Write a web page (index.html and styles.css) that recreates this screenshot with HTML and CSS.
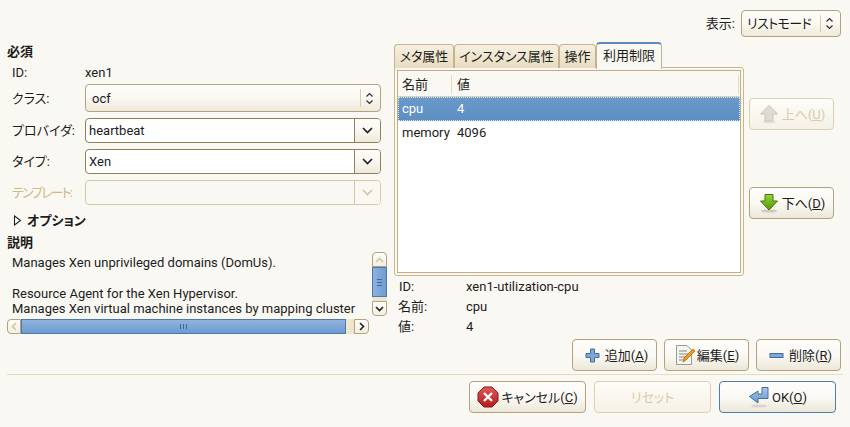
FILE: index.html
```html
<!DOCTYPE html>
<html lang="ja">
<head>
<meta charset="utf-8">
<title>リソース</title>
<link rel="stylesheet" href="styles.css">
</head>
<body>
<div class="dialog">
  <div class="topbar">
    <span class="topbar-label">表示:</span>
    <div class="combo combo-mode"><span class="combo-text">リストモード</span><span class="combo-sep"></span>
      <svg class="updown" width="9" height="13" viewBox="0 0 9 13"><path d="M1.5 4.5 4.5 1.5 7.5 4.5M1.5 8.5 4.5 11.5 7.5 8.5" fill="none" stroke="#2e2e2e" stroke-width="1.2"/></svg>
    </div>
  </div>
  <div class="main">
    <div class="left">
      <div class="heading h-required">必須</div>
      <div class="row row-id"><span class="lbl">ID:</span><span class="idval">xen1</span></div>
      <div class="row row-class"><span class="lbl">クラス:</span>
        <div class="combo combo-class"><span class="combo-text">ocf</span><span class="combo-sep"></span>
          <svg class="updown" width="9" height="13" viewBox="0 0 9 13"><path d="M1.5 4.5 4.5 1.5 7.5 4.5M1.5 8.5 4.5 11.5 7.5 8.5" fill="none" stroke="#2e2e2e" stroke-width="1.2"/></svg>
        </div>
      </div>
      <div class="row row-entry"><span class="lbl">プロバイダ:</span>
        <div class="entry-combo"><span class="entry">heartbeat</span><span class="arrowbtn"><svg width="11" height="7" viewBox="0 0 11 7"><path d="M1 1 5.5 5.5 10 1" fill="none" stroke="#222" stroke-width="1.7"/></svg></span></div>
      </div>
      <div class="row row-entry"><span class="lbl">タイプ:</span>
        <div class="entry-combo"><span class="entry">Xen</span><span class="arrowbtn"><svg width="11" height="7" viewBox="0 0 11 7"><path d="M1 1 5.5 5.5 10 1" fill="none" stroke="#222" stroke-width="1.7"/></svg></span></div>
      </div>
      <div class="row row-entry is-disabled"><span class="lbl">テンプレート:</span>
        <div class="entry-combo"><span class="entry"></span><span class="arrowbtn"><svg width="11" height="7" viewBox="0 0 11 7"><path d="M1 1 5.5 5.5 10 1" fill="none" stroke="#d3c5a2" stroke-width="1.7"/></svg></span></div>
      </div>
      <div class="expander"><svg width="9" height="11" viewBox="0 0 9 11"><path d="M1.5 1 7.5 5.5 1.5 10Z" fill="#fff" stroke="#222" stroke-width="1.1"/></svg><span>オプション</span></div>
      <div class="heading h-desc">説明</div>
      <div class="scrolled">
        <div class="desc">Manages Xen unprivileged domains (DomUs).<br><br>Resource Agent for the Xen Hypervisor.<br>Manages Xen virtual machine instances by mapping cluster</div>
        <div class="vscroll">
          <span class="sb-btn sb-v"><svg width="9" height="6" viewBox="0 0 9 6"><path d="M1 5 4.5 1.5 8 5" fill="none" stroke="#d3c5a2" stroke-width="1.6"/></svg></span>
          <span class="thumb-v"><i></i><i></i><i></i></span>
          <span class="trough"></span>
          <span class="sb-btn sb-v"><svg width="9" height="6" viewBox="0 0 9 6"><path d="M1 1 4.5 4.5 8 1" fill="none" stroke="#222" stroke-width="1.6"/></svg></span>
        </div>
        <div class="hscroll">
          <span class="sb-btn sb-h"><svg width="6" height="9" viewBox="0 0 6 9"><path d="M5 1 1.5 4.5 5 8" fill="none" stroke="#d3c5a2" stroke-width="1.6"/></svg></span>
          <span class="thumb-h"><i></i><i></i><i></i></span>
          <span class="trough"></span>
          <span class="sb-btn sb-h"><svg width="6" height="9" viewBox="0 0 6 9"><path d="M1 1 4.5 4.5 1 8" fill="none" stroke="#222" stroke-width="1.6"/></svg></span>
        </div>
      </div>
    </div>
    <div class="right">
      <div class="tabs">
        <span class="tab tab-a">メタ属性</span>
        <span class="tab tab-b">インスタンス属性</span>
        <span class="tab tab-c">操作</span>
        <span class="tab tab-active">利用制限</span>
      </div>
      <div class="panel-row">
        <div class="panel">
          <div class="tree">
            <div class="tree-head"><span class="col-name">名前</span><span class="col-val">値</span></div>
            <div class="tree-row selected"><span class="col-name">cpu</span><span class="col-val">4</span></div>
            <div class="tree-row"><span class="col-name">memory</span><span class="col-val">4096</span></div>
          </div>
        </div>
        <div class="move-btns">
          <button class="btn btn-move" disabled>
            <svg width="20" height="20" viewBox="0 0 20 20"><ellipse cx="10" cy="18" rx="7" ry="1.5" fill="#e6e1d6"/><path d="M10 1.5 18.500 10H14V17H6V10H1.500Z" fill="#dedbd2" stroke="#c8c5bb"/></svg>
            <span>上へ(<u>U</u>)</span>
          </button>
          <button class="btn btn-move">
            <svg width="20" height="20" viewBox="0 0 20 20"><defs><linearGradient id="g" x1="0" y1="0" x2="0" y2="1"><stop offset="0" stop-color="#9bd03c"/><stop offset="1" stop-color="#4e9a06"/></linearGradient></defs><ellipse cx="10" cy="18" rx="8" ry="1.6" fill="#cfcabd"/><path d="M6 1.500H14V8H18.500L10 17 1.500 8H6Z" fill="url(#g)" stroke="#3f7d05"/></svg>
            <span>下へ(<u>D</u>)</span>
          </button>
        </div>
      </div>
      <div class="details">
        <span class="d-id">ID:</span><span>xen1-utilization-cpu</span>
        <span>名前:</span><span>cpu</span>
        <span>値:</span><span>4</span>
      </div>
      <div class="actions">
        <button class="btn btn-act btn-shift">
          <svg width="15" height="15" viewBox="0 0 15 15"><path d="M5.500 1H9.500V5.500H14V9.500H9.500V14H5.500V9.500H1V5.500H5.500Z" fill="#7fa6d4" stroke="#3e6ea6"/></svg>
          <span>追加(<u>A</u>)</span>
        </button>
        <button class="btn btn-act btn-edit">
          <svg width="22" height="22" viewBox="0 0 22 22"><path d="M2.500 1.500H13L17.500 6V20.500H2.500Z" fill="#f4f4f0" stroke="#9a9a92"/><path d="M5 7H13M5 10H14M5 13H11M5 16H9" stroke="#8b8b85"/><path d="M9 18 10 14 19 5 21 7 12 16Z" fill="#f29a1f" stroke="#b86a0c" stroke-width=".8"/></svg>
          <span>編集(<u>E</u>)</span>
        </button>
        <button class="btn btn-act btn-shift">
          <svg width="15" height="15" viewBox="0 0 15 15"><rect x="1" y="5.500" width="13" height="4" fill="#7fa6d4" stroke="#3e6ea6"/></svg>
          <span>削除(<u>R</u>)</span>
        </button>
      </div>
    </div>
  </div>
  <div class="separator"></div>
  <div class="bottom">
    <button class="btn btn-bottom">
      <svg width="22" height="22" viewBox="0 0 22 22"><defs><linearGradient id="r" x1="0" y1="0" x2="0" y2="1"><stop offset="0" stop-color="#e05a5a"/><stop offset="1" stop-color="#b41a1a"/></linearGradient></defs><path d="M7 1H15L21 7V15L15 21H7L1 15V7Z" fill="url(#r)" stroke="#8f1414"/><path d="M7 7 15 15M15 7 7 15" stroke="#fff" stroke-width="2.400"/></svg>
      <span>キャンセル(<u>C</u>)</span>
    </button>
    <button class="btn btn-bottom" disabled><span>リセット</span></button>
    <button class="btn btn-bottom btn-default">
      <svg width="22" height="22" viewBox="0 0 22 22"><defs><linearGradient id="b" x1="0" y1="0" x2="0" y2="1"><stop offset="0" stop-color="#a9c6e8"/><stop offset="1" stop-color="#6a96cb"/></linearGradient></defs><ellipse cx="11" cy="20" rx="8" ry="1.600" fill="#d9d5c9"/><path d="M14 1.500H20V12.500H10V17L1.500 10.500 10 5V8H14Z" fill="url(#b)" stroke="#3e6ea6"/></svg>
      <span>OK(<u>O</u>)</span>
    </button>
  </div>
</div>
</body>
</html>
```
FILE: styles.css
```css
* { box-sizing: border-box; }
html, body { margin: 0; padding: 0; }
body {
  width: 850px;
  height: 427px;
  overflow: hidden;
  background: #faf8f2;
  color: #1c1c1c;
  font: 13px/15px Roboto, "Noto Sans CJK JP", sans-serif;
  font-feature-settings: "palt";
}
.dialog { display: flex; flex-direction: column; padding: 10px 9px 0 7px; }
.topbar { display: flex; justify-content: flex-end; align-items: center; height: 27px; gap: 6px; }
.main { display: flex; gap: 7px; }
.left { width: 380px; display: flex; flex-direction: column; padding-top: 7px; }
.right { width: 447px; display: flex; flex-direction: column; padding-top: 4px; }
.heading { font-weight: 700; height: 16px; line-height: 16px; }
.h-required { margin-bottom: 3px; }
.h-desc { margin-top: 6px; margin-bottom: 1px; }
.row { display: flex; align-items: center; padding-left: 5px; width: 374px; }
.lbl { width: 73px; flex: none; white-space: nowrap; }
.row-id { height: 18px; }
.row-class { height: 28px; margin-top: 3px; }
.row-entry { height: 25px; margin-top: 6px; }
.combo {
  display: flex;
  align-items: center;
  border: 1px solid #b3a27c;
  border-radius: 4px;
  background: linear-gradient(#fdfcf9 0%, #fbf9f4 45%, #eee9da 100%);
  height: 100%;
}
.combo-mode { width: 100px; padding: 0 6px 0 5px; }
.combo-mode .combo-text { letter-spacing: -0.6px; }
.combo-class { flex: 1; padding: 0 6px; }
.combo-text { flex: 1; white-space: nowrap; }
.combo-sep { width: 1px; align-self: stretch; margin: 4px 4px 4px 0; background: #d9cba9; }
.updown { flex: none; }
.entry-combo {
  flex: 1;
  height: 100%;
  display: flex;
  border: 1px solid #8f7f5a;
  border-radius: 4px;
  overflow: hidden;
  background: #fff;
}
.entry { flex: 1; padding-left: 3px; line-height: 23px; border-right: 1px solid #8f7f5a; }
.arrowbtn {
  width: 25px;
  flex: none;
  display: flex;
  align-items: center;
  justify-content: center;
  background: linear-gradient(#fdfcf9 0%, #faf8f2 45%, #eee9da 100%);
}
.is-disabled .lbl { color: #cdb98b; letter-spacing: -1.9px; }
.is-disabled .entry-combo { border-color: #d6c8a4; background: #faf8f2; }
.is-disabled .entry { border-right-color: #d6c8a4; }
.is-disabled .arrowbtn { background: #faf8f2; }
.expander { display: flex; align-items: center; gap: 5px; height: 18px; margin-top: 6px; padding-left: 6px; font-weight: 700; }
.scrolled { display: grid; grid-template-columns: 362px 3px 15px; grid-template-rows: 64px 15px; row-gap: 3px; }
.desc { grid-column: 1 / 3; padding: 3px 0 0 5px; line-height: 15.33px; height: 64px; overflow: hidden; white-space: nowrap; }
.vscroll { grid-column: 3; display: flex; flex-direction: column; height: 64px; }
.hscroll { grid-column: 1; grid-row: 2; display: flex; height: 15px; }
.sb-btn {
  flex: none;
  display: flex;
  align-items: center;
  justify-content: center;
  border: 1px solid #b3a27c;
  background: linear-gradient(#fdfcf9, #f3efe3);
}
.sb-v { height: 15px; }
.sb-v:first-child { border-radius: 4px 4px 0 0; }
.sb-v:last-child { border-radius: 0 0 4px 4px; }
.sb-h { width: 15px; }
.sb-h:first-child { border-radius: 4px 0 0 4px; width: 14px; }
.sb-h:last-child { border-radius: 0 4px 4px 0; }
.trough { flex: 1; background: #efe6ce; }
.thumb-v, .thumb-h {
  flex: none;
  display: flex;
  align-items: center;
  justify-content: center;
  border: 1px solid #4d78ac;
}
.thumb-v { height: 30px; flex-direction: column; gap: 2px; background: linear-gradient(90deg, #8eb3de, #6f9cd0); }
.thumb-h { width: 325px; gap: 2px; background: linear-gradient(#8fb4df, #6e9bcf); }
.thumb-v i { width: 5px; height: 1px; background: #3f6797; }
.thumb-h i { width: 1px; height: 5px; background: #3f6797; }
.tabs { display: flex; align-items: flex-end; height: 27px; position: relative; z-index: 1; }
.tab {
  height: 24px;
  line-height: 24px;
  text-align: center;
  border: 1px solid #c4b48d;
  border-bottom: 0;
  border-radius: 4px 4px 0 0;
  background: linear-gradient(#f6f0e0, #e8dcbf);
}
.tab-a { width: 60px; }
.tab-b { width: 105px; }
.tab-c { width: 37px; }
.tab-active {
  width: 66px;
  height: 27px;
  line-height: 23px;
  background: #faf8f2;
  border-color: #c4b48d;
  border-top: 2px solid #5a8ac0;
  margin-bottom: -1px;
}
.panel-row { display: flex; gap: 5px; }
.panel {
  width: 350px;
  height: 209px;
  margin-top: -1px;
  padding: 2px;
  border: 1px solid #c9b88f;
  border-radius: 0 3px 3px 3px;
}
.tree { height: 100%; border: 1px solid #c0ae84; background: #fff; }
.tree-head {
  display: flex;
  height: 26px;
  line-height: 26px;
  background: #faf8f2;
  border-bottom: 1px solid #dfd3b6;
}
.tree-head .col-name { border-right: 1px solid #e4dac2; height: 19px; margin-top: 4px; line-height: 19px; }
.tree-head .col-val { flex: 1; border-right: 1px solid #e4dac2; height: 19px; margin-top: 4px; line-height: 19px; margin-right: 1px; }
.col-name { width: 54px; padding-left: 4px; flex: none; }
.col-val { padding-left: 5px; }
.tree-row { display: flex; height: 24px; line-height: 24px; }
.selected { background: linear-gradient(#6b9acb, #5c8ec3); color: #fff; outline: 1px dotted #d5e2f0; outline-offset: -1px; }
.move-btns { display: flex; flex-direction: column; gap: 57px; padding-top: 30px; }
.btn {
  display: inline-flex;
  align-items: center;
  justify-content: center;
  padding: 0;
  font: inherit;
  font-feature-settings: "palt";
  color: #1c1c1c;
  height: 32px;
  border: 1px solid #b3a27c;
  border-radius: 4px;
  background: linear-gradient(#fefdfb 0%, #fbf9f4 50%, #ece7d8 100%);
}
.btn u { text-decoration: underline; }
.btn:disabled {
  color: #d9cba9;
  border-color: #ddd0b0;
  background: linear-gradient(#fdfcf8, #f5f1e6);
}
.btn-move { width: 85px; gap: 3px; padding-left: 1px; }
.details {
  display: grid;
  grid-template-columns: 68px 1fr;
  grid-auto-rows: 20px;
  align-items: center;
  padding-left: 4px;
}
.d-id { padding-left: 1px; }
.actions { display: flex; justify-content: flex-end; gap: 7px; margin-top: 3px; }
.btn-act { width: 85px; gap: 5px; }
.btn-shift { padding-left: 4px; }
.btn-edit { gap: 1px; }
.separator { height: 1px; margin-top: 3px; background: #e8dcc0; width: 836px; }
.bottom { display: flex; justify-content: flex-end; gap: 8px; margin-top: 6px; width: 829px; }
.btn-bottom { width: 117px; gap: 2px; }
.btn-default { border-color: #4f7cae; }
```
